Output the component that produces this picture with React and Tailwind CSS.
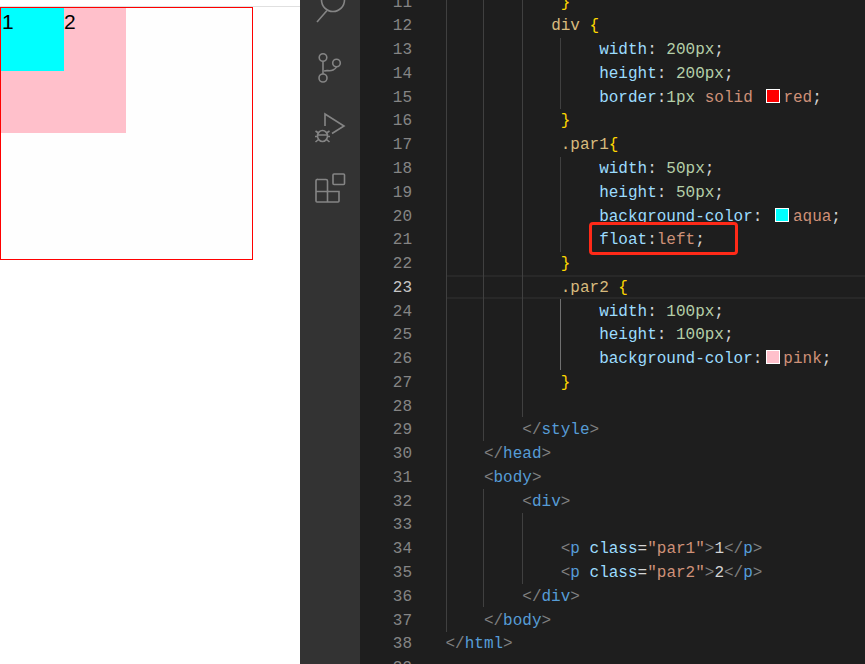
const prop = 'text-[#9cdcfe]';
const num = 'text-[#b5cea8]';
const str = 'text-[#ce9178]';
const sel = 'text-[#d7ba7d]';
const brace = 'text-[#ffd700]';
const tag = 'text-[#569cd6]';
const punct = 'text-[#808080]';
const plain = 'text-[#d4d4d4]';

const sp = (n) => [' '.repeat(n), plain];
const cssLine = (name, value) => [sp(16), [name, prop], [': ', plain], [value + 'px', num], [';', plain]];

const lines = [
  [11, [sp(12), ['}', brace]]],
  [12, [sp(11), ['div', sel], [' ', plain], ['{', brace]]],
  [13, cssLine('width', '200')],
  [14, cssLine('height', '200')],
  [15, [sp(16), ['border', prop], [':', plain], ['1px', num], [' ', plain], ['solid', str], [' ', plain], { swatch: 'bg-[#ff0000]' }, ['red', str], [';', plain]]],
  [16, [sp(12), ['}', brace]]],
  [17, [sp(12), ['.par1', sel], ['{', brace]]],
  [18, cssLine('width', '50')],
  [19, cssLine('height', '50')],
  [20, [sp(16), ['background-color', prop], [': ', plain], { swatch: 'bg-[#00ffff]' }, ['aqua', str], [';', plain]]],
  [21, [sp(16), ['float', prop], [':', plain], ['left', str], [';', plain]]],
  [22, [sp(12), ['}', brace]]],
  [23, [sp(12), ['.par2', sel], [' ', plain], ['{', brace]]],
  [24, cssLine('width', '100')],
  [25, cssLine('height', '100')],
  [26, [sp(16), ['background-color', prop], [':', plain], { swatch: 'bg-[#ffc0cb]' }, ['pink', str], [';', plain]]],
  [27, [sp(12), ['}', brace]]],
  [28, []],
  [29, [sp(8), ['</', punct], ['style', tag], ['>', punct]]],
  [30, [sp(4), ['</', punct], ['head', tag], ['>', punct]]],
  [31, [sp(4), ['<', punct], ['body', tag], ['>', punct]]],
  [32, [sp(8), ['<', punct], ['div', tag], ['>', punct]]],
  [33, []],
  [34, [sp(12), ['<', punct], ['p', tag], [' ', plain], ['class', prop], ['=', plain], ['"par1"', str], ['>', punct], ['1', plain], ['</', punct], ['p', tag], ['>', punct]]],
  [35, [sp(12), ['<', punct], ['p', tag], [' ', plain], ['class', prop], ['=', plain], ['"par2"', str], ['>', punct], ['2', plain], ['</', punct], ['p', tag], ['>', punct]]],
  [36, [sp(8), ['</', punct], ['div', tag], ['>', punct]]],
  [37, [sp(4), ['</', punct], ['body', tag], ['>', punct]]],
  [38, [['</', punct], ['html', tag], ['>', punct]]],
  [39, []],
];

function Swatch({ color }) {
  return <span className={`inline-block w-[14px] h-[14px] ml-[3.500px] mr-[3.500px] border border-white align-[-1px] ${color}`} />;
}

// indent guides, top and height are relative to the code column
function Guide({ left, top, height, bright }) {
  return (
    <div
      className={`absolute w-px ${bright ? 'bg-[#707070]' : 'bg-[#404040]'}`}
      style={{ left, top, height }}
    />
  );
}

function ActivityBar() {
  return (
    <div className="w-[60px] shrink-0 bg-[#333333]">
      <svg width="60" height="664" fill="none" stroke="#858585" strokeWidth="1.6">
        {/* search */}
        <circle cx="33" cy="0" r="11.5" />
        <path d="M17 22 L27 10.5" />
        {/* source control */}
        <circle cx="23" cy="57.5" r="3.8" />
        <circle cx="36.5" cy="63" r="3.8" />
        <circle cx="23" cy="78" r="4" />
        <path d="M23 61.5 V74" />
        <path d="M24 71 C27 70 30 71.500 33 70 C35 69 36 68 36.500 67" />
        {/* run and debug */}
        <path d="M25 126 V114 L44 126 L32 133.500" />
        <ellipse cx="22.500" cy="136" rx="5" ry="5.500" />
        <path d="M17.500 135 H27.500 M15.500 131 L18.500 133 M29.500 131 L26.500 133 M15 136.500 H17.500 M30 136.500 H27.500 M15.500 142 L18.500 139.500 M29.500 142 L26.500 139.500" />
        {/* extensions */}
        <path d="M18 179.500 H26 A1.500 1.500 0 0 1 27.500 181 V191.500 H39 V201 A1 1 0 0 1 38 202 H17 A1 1 0 0 1 16 201 V181 A1.500 1.500 0 0 1 18 179.500 Z" />
        <path d="M16 191.500 H27.500 V202" />
        <rect x="33" y="174" width="11.500" height="10.500" rx="1" />
      </svg>
    </div>
  );
}

export default function App() {
  return (
    <div className="flex w-[865px] h-[664px] overflow-hidden bg-white">
      {/* Browser preview */}
      <div className="w-[300px] shrink-0 bg-white">
        <div className="h-[7px] border-b border-[#e0e0e0]" />
        <div className="w-[253px] h-[253px] border border-[#ff0000] bg-[#fefefe] text-[21px] leading-[28px] text-black font-['Liberation_Sans',sans-serif]">
          <div className="w-[125px] h-[125px] bg-[#ffc0cb]">
            <div className="float-left w-[63px] h-[63px] pl-px bg-[#00ffff]">1</div>
            2
          </div>
        </div>
      </div>

      <ActivityBar />

      {/* Editor */}
      <div className="flex-1 relative overflow-hidden bg-[#1e1e1e] font-['Liberation_Mono',monospace] text-[16px] leading-[23.77px]">
        <div className="relative -mt-[8.4px]">
          {/* current line highlight */}
          <div className="absolute left-[86px] right-0 top-[283.500px] h-[24px] border-y-2 border-[#282828]" />
          <Guide left={86} top={0} height={640} />
          <Guide left={123} top={0} height={449} />
          <Guide left={123} top={497} height={118} />
          <Guide left={162} top={0} height={425} />
          <Guide left={162} top={521} height={71} />
          <Guide left={200} top={46} height={71} />
          <Guide left={200} top={165} height={95} />
          <Guide left={200} top={307} height={71} bright />
          {lines.map(([n, tokens]) => (
            <div key={n} className="relative flex h-[23.77px] whitespace-pre">
              <div className={`w-[52px] shrink-0 text-right ${n === 23 ? 'text-[#c6c6c6]' : 'text-[#858585]'}`}>{n}</div>
              <div className="pl-[33.500px]">
                {tokens.map((t, i) =>
                  t.swatch ? <Swatch key={i} color={t.swatch} /> : <span key={i} className={t[1]}>{t[0]}</span>
                )}
              </div>
            </div>
          ))}
        </div>
        {/* red annotation around float:left */}
        <div className="absolute left-[229px] top-[222px] w-[149px] h-[33px] border-[3px] border-[#ff2a18] rounded-[4px]" />
      </div>
    </div>
  );
}
